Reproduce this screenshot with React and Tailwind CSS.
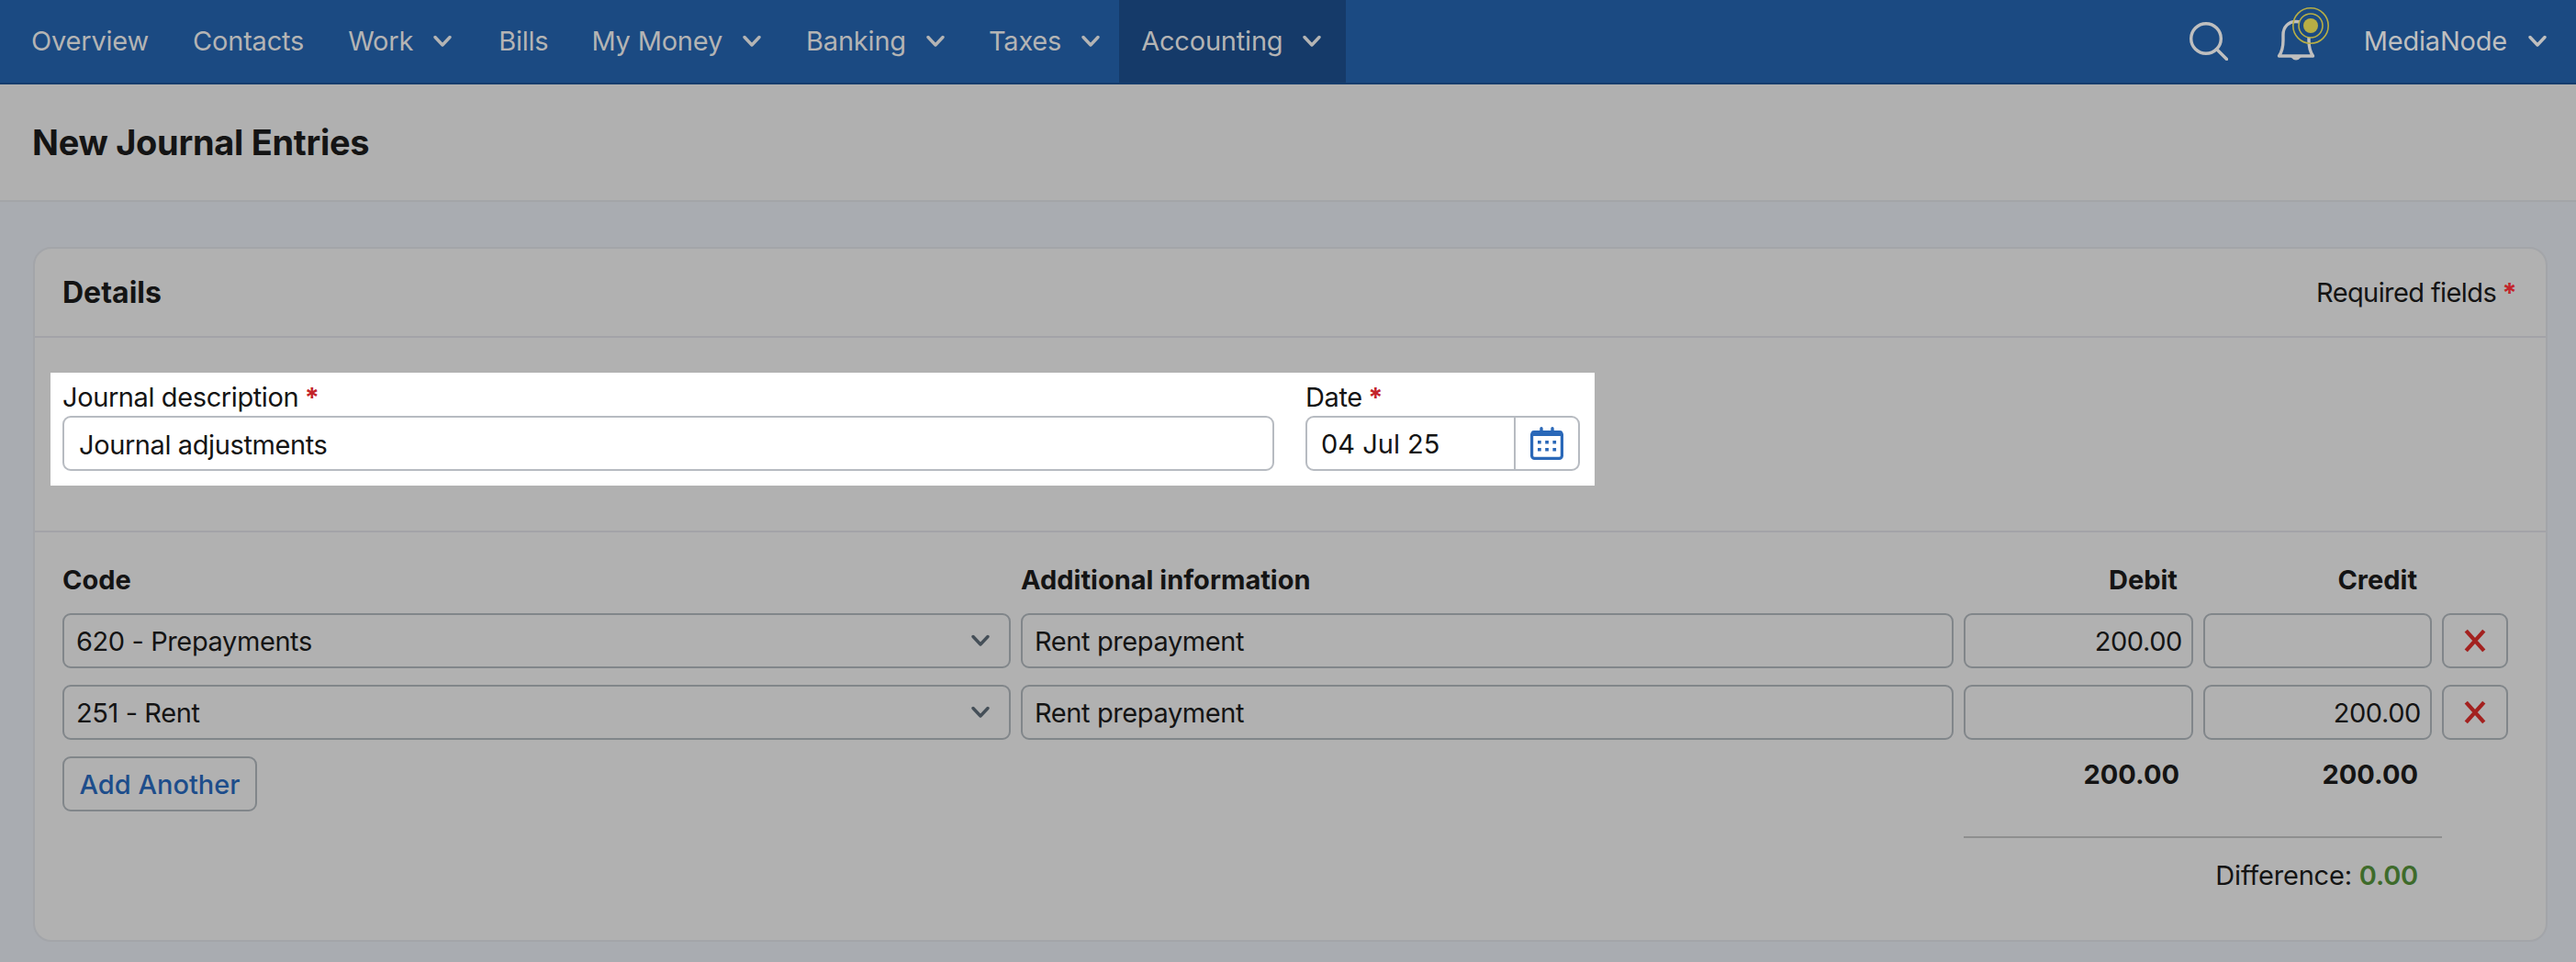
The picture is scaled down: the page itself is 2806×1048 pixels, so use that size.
const FONT = "font-['Inter','Liberation_Sans',sans-serif]";

const NAV_ITEMS = [
    { label: 'Overview', pad: 'pr-[24px]' },
    { label: 'Contacts', pad: 'pr-[24px]' },
    { label: 'Work', menu: true, pad: 'pr-[27px]' },
    { label: 'Bills', pad: 'pr-[23px]' },
    { label: 'My Money', menu: true, pad: 'pr-[25px]' },
    { label: 'Banking', menu: true, pad: 'pr-[24px]' },
    { label: 'Taxes', menu: true, pad: 'pr-[21px]' },
    { label: 'Accounting', menu: true, active: true, pad: 'pr-[27px]' },
];

const Chevron = ({ className }) => (
    <svg viewBox="0 0 20 14" className={className} fill="none" stroke="currentColor" strokeWidth="3.4" strokeLinecap="round" strokeLinejoin="round">
        <path d="M2 2.5 L10 11 L18 2.5" />
    </svg>
);

const Star = () => <span className="text-[#c3242a] font-bold"> *</span>;

const Bell = () => (
    <svg viewBox="0 0 60 60" className="w-[60px] h-[60px]" fill="none">
        <path d="M3.5 55 C7 50 8 46 8 38 V32 C8 23 14 17.5 22 17.5 C30 17.5 36 23 36 32 V38 C36 46 37 50 40.5 55 Z" stroke="#bfbfbf" strokeWidth="3.4" strokeLinejoin="round" />
        <path d="M16 56 Q22 63 28 56 Z" fill="#bfbfbf" />
        <circle cx="38" cy="22" r="13" fill="#1b4a82" stroke="#b7ae45" strokeWidth="1.6" />
        <circle cx="38" cy="22" r="19.2" stroke="#b7ae45" strokeWidth="1.6" />
        <circle cx="38" cy="22" r="8" fill="#b7ae45" />
    </svg>
);

const Field = ({ value, align = 'left', className = '' }) => (
    <div className={`h-[60px] pt-[2px] border-2 border-[#81868a] rounded-[9px] flex items-center text-[29px] tracking-[-0.4px] text-[#141414] ${align === 'right' ? 'justify-end pr-[10px]' : 'pl-[13px]'} ${className}`}>
        {value}
    </div>
);

const Row = ({ code, info, debit, credit }) => (
    <div className="flex gap-[11px] mb-[18px]">
        <div className="w-[1033px] relative">
            <Field value={code} />
            <Chevron className="absolute right-[23px] top-[23px] w-[20px] h-[14px] text-[#454f58]" />
        </div>
        <Field value={info} className="w-[1016px]" />
        <Field value={debit} align="right" className="w-[250px]" />
        <Field value={credit} align="right" className="w-[249px]" />
        <div className="w-[72px] h-[60px] border-2 border-[#81868a] rounded-[9px] flex items-center justify-center text-[#a3211f]">
            <svg viewBox="0 0 24 24" className="w-[26px] h-[26px]" fill="none" stroke="currentColor" strokeWidth="4"><path d="M3 2 L21 22 M21 2 L3 22" /></svg>
        </div>
    </div>
);

const App = () => {
    return (
        <div className={`w-[2806px] h-[1048px] overflow-hidden bg-[#a9acb1] text-[#141414] ${FONT}`}>
            <nav className="h-[92px] bg-[#1b4a82] border-b-2 border-[#163d6d] flex pl-[10px] text-[29px] tracking-[-0.2px] text-[#b4b4b4]">
                {NAV_ITEMS.map(item => (
                    <div key={item.label} className={`h-[90px] flex items-center pl-[24px] gap-[22px] ${item.pad} ${item.active ? 'bg-[#153a69]' : ''}`}>
                        <span>{item.label}</span>
                        {item.menu && <Chevron className="w-[20px] h-[14px]" />}
                    </div>
                ))}
                <div className="ml-auto flex items-center pr-[32px] text-[#bfbfbf]">
                    <svg viewBox="0 0 42 42" className="w-[42px] h-[42px] mr-[52px]" fill="none" stroke="currentColor" strokeWidth="3.4" strokeLinecap="round">
                        <circle cx="18" cy="18" r="16.3" />
                        <path d="M29.5 29.5 L40.5 40.5" />
                    </svg>
                    <div className="mr-[36px] -mt-[18px]"><Bell /></div>
                    <span className="mr-[23px]">MediaNode</span>
                    <Chevron className="w-[20px] h-[14px]" />
                </div>
            </nav>

            <header className="h-[128px] bg-[#b0b0b0] border-b-2 border-[#a3a5a8] flex items-center pl-[35px]">
                <h1 className="text-[38px] font-bold tracking-[-0.3px]">New Journal Entries</h1>
            </header>

            <section className="ml-[36px] mr-[31px] mt-[49px] h-[757px] bg-[#b1b1b1] border-2 border-[#a3a5a9] rounded-[20px]">
                <div className="h-[97px] border-b-2 border-[#a3a3a8] flex items-center justify-between pl-[30px] pr-[32px]">
                    <h2 className="text-[32px] font-bold">Details</h2>
                    <span className="text-[29px] tracking-[-0.6px]">Required fields<Star /></span>
                </div>

                <div className="h-[212px] border-b-2 border-[#a3a3a8] pt-[38px] pl-[17px]">
                    <div className="w-[1682px] h-[123px] bg-white px-[13px] pt-[9px] text-[29px] tracking-[-0.4px]">
                        <div className="flex gap-[34px]">
                            <div className="w-[1320px]">
                                <label className="block leading-[36px] mb-[2px]">Journal description<Star /></label>
                                <div className="h-[60px] pt-[4px] border-2 border-[#b7bbc1] rounded-[9px] flex items-center pl-[16px]">Journal adjustments</div>
                            </div>
                            <div className="w-[299px]">
                                <label className="block leading-[36px] mb-[2px]">Date<Star /></label>
                                <div className="h-[60px] border-2 border-[#b7bbc1] rounded-[9px] flex items-center">
                                    <span className="w-[227px] pl-[15px] pt-[2px] h-full flex items-center border-r-2 border-[#b7bbc1] tracking-normal">04 Jul 25</span>
                                    <div className="flex-1 flex items-center justify-center">
                                        <svg viewBox="0 0 36 36" className="w-[36px] h-[36px]" fill="none">
                                            <rect x="1.6" y="5.6" width="32.8" height="28.8" rx="3" stroke="#2a68b8" strokeWidth="3.2" />
                                            <rect x="1.6" y="4.5" width="32.8" height="5.5" fill="#2a68b8" />
                                            <path d="M12 1.7 V7 M24 1.7 V7" stroke="#2a68b8" strokeWidth="3.4" strokeLinecap="round" />
                                            <path d="M8 15h3.7v3.5H8z M16.2 15h3.7v3.5h-3.7z M24.4 15h3.7v3.5h-3.7z M8 23h3.7v3.5H8z M16.2 23h3.7v3.5h-3.7z M24.4 23h3.7v3.5h-3.7z" fill="#2a68b8" />
                                        </svg>
                                    </div>
                                </div>
                            </div>
                        </div>
                    </div>
                </div>

                <div className="pl-[30px] pt-[34px]">
                    <div className="flex text-[29px] leading-[36px] font-bold h-[54px]">
                        <span className="w-[1044px]">Code</span>
                        <span className="w-[1027px]">Additional information</span>
                        <span className="w-[233px] text-right">Debit</span>
                        <span className="w-[261px] text-right">Credit</span>
                    </div>
                    <Row code="620 - Prepayments" info="Rent prepayment" debit="200.00" />
                    <Row code="251 - Rent" info="Rent prepayment" credit="200.00" />
                    <div className="flex">
                        <button className="w-[212px] h-[60px] pt-[2px] border-2 border-[#81868a] rounded-[9px] text-[29px] font-medium text-[#1d4d8b]">Add Another</button>
                        <div className="ml-[1859px] w-[521px] mt-[2px]">
                            <div className="flex text-[29px] leading-[36px] font-bold h-[87px] border-b-2 border-[#8e8f8f]">
                                <span className="w-[235px] text-right">200.00</span>
                                <span className="w-[260px] text-right">200.00</span>
                            </div>
                            <div className="w-[495px] text-right text-[29px] leading-[36px] tracking-[-0.2px] pt-[23px]">Difference: <span className="text-[#3e6b2b] font-semibold">0.00</span></div>
                        </div>
                    </div>
                </div>
            </section>
        </div>
    );
};

export default App;
